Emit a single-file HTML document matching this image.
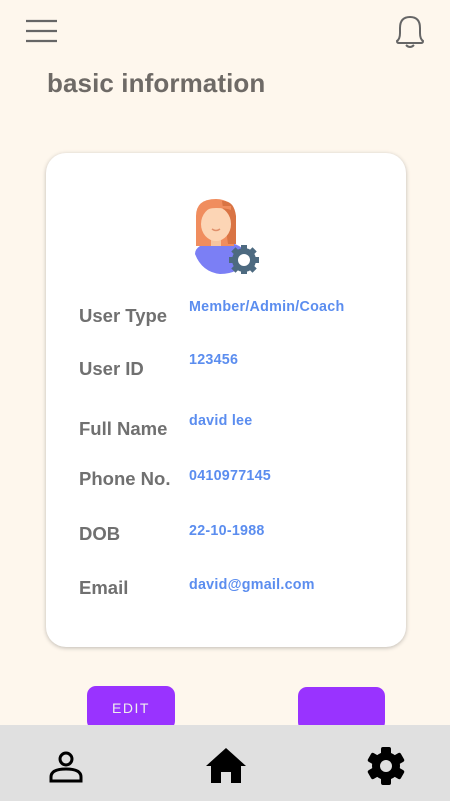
<!DOCTYPE html>
<html><head><style>
body{margin:0;width:450px;height:801px;background:#fef7ed;position:relative;overflow:hidden;font-family:"Liberation Sans",Arial,sans-serif}
.a{position:absolute}
.card{left:46px;top:153px;width:360px;height:494px;background:#fff;border-radius:20px;box-shadow:0 1px 4px rgba(0,0,0,.25)}
.l{left:79px;font-size:18.5px;font-weight:bold;color:#707070;line-height:20px}
.v{left:189px;font-size:14.3px;font-weight:bold;color:#5b8def;line-height:16px;letter-spacing:0.25px}
.btn{background:#9933ff;border-radius:9px;color:#eee;font-size:14px;letter-spacing:1.5px;text-align:center;line-height:44px}
</style></head><body>
<svg class="a" style="left:25px;top:19px" width="33" height="24"><g stroke="#666" stroke-width="2.2"><line x1="1" y1="2" x2="32" y2="2"/><line x1="1" y1="12" x2="32" y2="12"/><line x1="1" y1="22" x2="32" y2="22"/></g></svg>
<svg class="a" style="left:393px;top:14px" width="34" height="34" viewBox="0 0 34 34"><path d="M4 27 Q7 25 7 19 V14 Q7 3 17 3 Q27 3 27 14 V19 Q27 25 30 27 Q30 29 28 29 H6 Q4 29 4 27Z M13 31 Q17 35 21 31" fill="none" stroke="#666" stroke-width="2"/></svg>
<div class="a" style="left:47px;top:68px;font-size:26px;font-weight:bold;color:#6e6a66;letter-spacing:0.1px">basic information</div>
<div class="a card"></div>
<svg class="a" style="left:190px;top:196px" width="70" height="78" viewBox="0 0 70 78">
<path d="M5 58 Q5 48 25 46 L35 46 Q55 48 58 62 Q50 78 30 78 Q12 76 5 58Z" fill="#7b7ff5"/>
<path d="M6 50 V20 Q6 3 26 3 Q42 3 44 18 V50Z" fill="#f08d5e"/>
<path d="M32 5 Q44 4 46 20 V48 H38Z" fill="#d97444"/>
<rect x="21" y="38" width="10" height="12" fill="#f6c49f"/>
<ellipse cx="26" cy="28" rx="15" ry="17" fill="#fcd5b5"/>
<path d="M11 16 Q18 12 26 12 Q36 12 41 14 V10 H11Z" fill="#f08d5e"/>
<path d="M22 33 Q26 36 30 33" stroke="#e0906b" stroke-width="1.5" fill="none"/>
<circle cx="54" cy="64" r="12" fill="#4d6a80"/>
<g fill="#4d6a80"><rect x="51" y="49" width="6" height="30"/><rect x="39" y="61" width="30" height="6"/><rect x="51" y="49" width="6" height="30" transform="rotate(45 54 64)"/><rect x="51" y="49" width="6" height="30" transform="rotate(-45 54 64)"/></g>
<circle cx="54" cy="64" r="6" fill="#fff"/>
</svg>
<div class="a l" style="top:306px">User Type</div><div class="a v" style="top:299px">Member/Admin/Coach</div>
<div class="a l" style="top:359px">User ID</div><div class="a v" style="top:352px">123456</div>
<div class="a l" style="top:419px">Full Name</div><div class="a v" style="top:413px">david lee</div>
<div class="a l" style="top:469px">Phone No.</div><div class="a v" style="top:468px">0410977145</div>
<div class="a l" style="top:524px">DOB</div><div class="a v" style="top:523px">22-10-1988</div>
<div class="a l" style="top:578px">Email</div><div class="a v" style="top:577px">david@gmail.com</div>
<div class="a btn" style="left:87px;top:686px;width:88px;height:44px">EDIT</div>
<div class="a btn" style="left:298px;top:687px;width:87px;height:44px"></div>
<div class="a" style="left:0;top:725px;width:450px;height:76px;background:#e0e0e0"></div>
<svg class="a" style="left:49px;top:748px" width="36" height="36" viewBox="0 0 36 36"><circle cx="17" cy="11" r="6" fill="none" stroke="#000" stroke-width="3"/><path d="M2 33 V29 Q2 21 17 21 Q32 21 32 29 V33Z" fill="none" stroke="#000" stroke-width="3"/></svg>
<svg class="a" style="left:205px;top:747px" width="42" height="36" viewBox="0 0 42 36"><path d="M21 1 L41 19 H36 V36 H26 V25 H16 V36 H6 V19 H1Z" fill="#000"/></svg>
<svg class="a" style="left:365px;top:745px" width="42" height="42" viewBox="0 0 42 42"><g fill="#000"><circle cx="21" cy="21" r="14"/><rect x="16" y="2" width="10" height="38" rx="2"/><rect x="16" y="2" width="10" height="38" rx="2" transform="rotate(60 21 21)"/><rect x="16" y="2" width="10" height="38" rx="2" transform="rotate(-60 21 21)"/></g><circle cx="21" cy="21" r="6" fill="#e0e0e0"/></svg>
</body></html>
